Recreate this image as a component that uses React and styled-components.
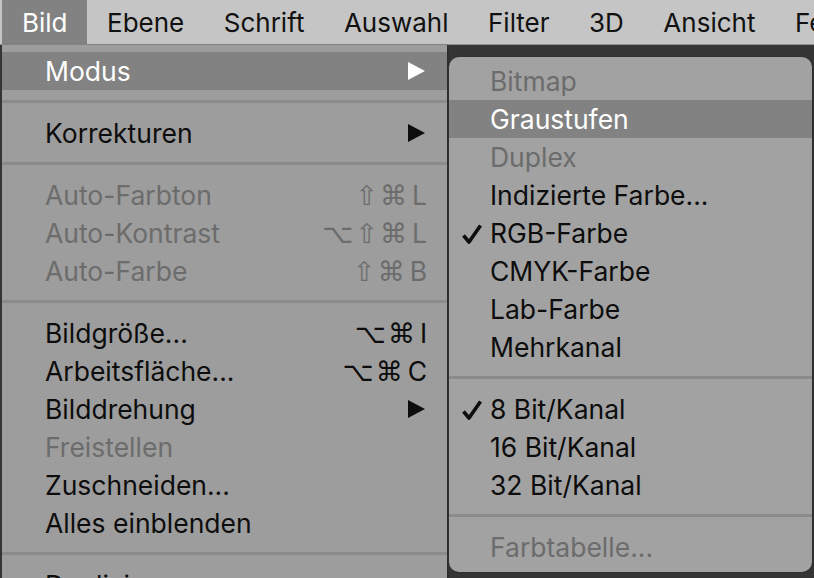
import React from 'react';
import styled, { createGlobalStyle } from 'styled-components';

const GlobalStyle = createGlobalStyle`
  html, body {
    margin: 0;
    padding: 0;
    width: 814px;
    height: 578px;
    overflow: hidden;
    background: #333;
  }
  body {
    font-family: Inter, "Noto Sans", "DejaVu Sans", sans-serif;
  }
`;

const Screen = styled.div`
  width: 814px;
  height: 578px;
  display: flex;
  flex-direction: column;
  overflow: hidden;
  background: #353535;
`;

const MenuBar = styled.div`
  height: 44px;
  flex: none;
  display: flex;
  align-items: stretch;
  padding-left: 2px;
  background: #c5c5c5;
  border-bottom: 1px solid #8e8e8e;
  overflow: hidden;
`;

const BarItem = styled.div`
  display: flex;
  align-items: center;
  padding: 0 19.5px 0 20px;
  font-size: 26px;
  white-space: nowrap;
  color: ${p => (p.$active ? '#fff' : '#111')};
  background: ${p => (p.$active ? '#828282' : 'transparent')};
`;

const Workspace = styled.div`
  flex: 1;
  display: flex;
  align-items: flex-start;
  gap: 2px;
  padding-left: 2px;
`;

const Menu = styled.div`
  flex: none;
  width: ${p => p.$width}px;
  margin-top: ${p => p.$top}px;
  padding: ${p => p.$pad};
  background: ${p => p.$bg};
  border-radius: ${p => p.$radius};
  box-shadow: 1px 0 2px rgba(0, 0, 0, 0.25);
  display: flex;
  flex-direction: column;
`;

const Row = styled.div`
  height: 38px;
  display: flex;
  align-items: center;
  padding: 0 20px 0 ${p => p.$indent}px;
  font-size: 26.5px;
  background: ${p => (p.$hover ? '#828282' : 'transparent')};
  color: ${p => (p.$hover ? '#fff' : p.$disabled ? '#6c6c6c' : '#0d0d0d')};
  position: relative;
`;

const Label = styled.span`
  flex: 1;
  white-space: nowrap;
`;

const Check = styled.svg`
  position: absolute;
  left: 12px;
  top: 9px;
  width: 22px;
  height: 22px;
`;

const Shortcut = styled.span`
  white-space: nowrap;
  display: flex;
  gap: 2px;
  align-items: center;
`;

const Key = styled.span`
  font-family: ${p => (p.$letter ? 'Inter, sans-serif' : '"DejaVu Sans", sans-serif')};
  font-size: ${p => (p.$letter ? '26.5px' : '27px')};
  margin-left: ${p => (p.$letter ? '3px' : '0')};
`;

const Arrow = styled.span`
  width: 0;
  height: 0;
  border-top: 9px solid transparent;
  border-bottom: 9px solid transparent;
  border-left: 17px solid currentColor;
  margin-right: 2px;
`;

const Separator = styled.div`
  height: 3px;
  margin: 10px 0 11px;
  background: #8b8b8b;
`;

const mainItems = [
  { label: 'Modus', hover: true, sub: true },
  'sep',
  { label: 'Korrekturen', sub: true },
  'sep',
  { label: 'Auto-Farbton', disabled: true, keys: ['⇧', '⌘', 'L'] },
  { label: 'Auto-Kontrast', disabled: true, keys: ['⌥', '⇧', '⌘', 'L'] },
  { label: 'Auto-Farbe', disabled: true, keys: ['⇧', '⌘', 'B'] },
  'sep',
  { label: 'Bildgröße...', keys: ['⌥', '⌘', 'I'] },
  { label: 'Arbeitsfläche...', keys: ['⌥', '⌘', 'C'] },
  { label: 'Bilddrehung', sub: true },
  { label: 'Freistellen', disabled: true },
  { label: 'Zuschneiden...' },
  { label: 'Alles einblenden' },
  'sep',
  { label: 'Duplizieren...' },
];

const subItems = [
  { label: 'Bitmap', disabled: true },
  { label: 'Graustufen', hover: true },
  { label: 'Duplex', disabled: true },
  { label: 'Indizierte Farbe...' },
  { label: 'RGB-Farbe', checked: true },
  { label: 'CMYK-Farbe' },
  { label: 'Lab-Farbe' },
  { label: 'Mehrkanal' },
  'sep',
  { label: '8 Bit/Kanal', checked: true },
  { label: '16 Bit/Kanal' },
  { label: '32 Bit/Kanal' },
  'sep',
  { label: 'Farbtabelle...', disabled: true },
];

const CheckMark = () => (
  <Check viewBox="0 0 22 22">
    <path d="M2.5 12.5 L8 19 L19.5 2.5" fill="none" stroke="currentColor" strokeWidth="3.6" strokeLinejoin="round" />
  </Check>
);

const MenuRows = ({ items, indent }) =>
  items.map((item, i) =>
    item === 'sep' ? (
      <Separator key={i} />
    ) : (
      <Row key={i} $indent={indent} $hover={item.hover} $disabled={item.disabled}>
        {item.checked && <CheckMark />}
        <Label>{item.label}</Label>
        {item.keys && (
          <Shortcut>
            {item.keys.map((k, j) => (
              <Key key={j} $letter={/[A-Z]/.test(k)}>{k}</Key>
            ))}
          </Shortcut>
        )}
        {item.sub && <Arrow />}
      </Row>
    )
  );

export default function App() {
  const bar = ['Bild', 'Ebene', 'Schrift', 'Auswahl', 'Filter', '3D', 'Ansicht', 'Fenster'];
  return (
    <Screen>
      <GlobalStyle />
      <MenuBar>
        {bar.map((b, i) => (
          <BarItem key={b} $active={i === 0}>{b}</BarItem>
        ))}
      </MenuBar>
      <Workspace>
        <Menu $width={445} $top={0} $pad="7px 0 0" $bg="#9d9d9d" $radius="0">
          <MenuRows items={mainItems} indent={43} />
        </Menu>
        <Menu $width={363} $top={12} $pad="5px 0 6px" $bg="#a2a2a2" $radius="10px">
          <MenuRows items={subItems} indent={41} />
        </Menu>
      </Workspace>
    </Screen>
  );
}
